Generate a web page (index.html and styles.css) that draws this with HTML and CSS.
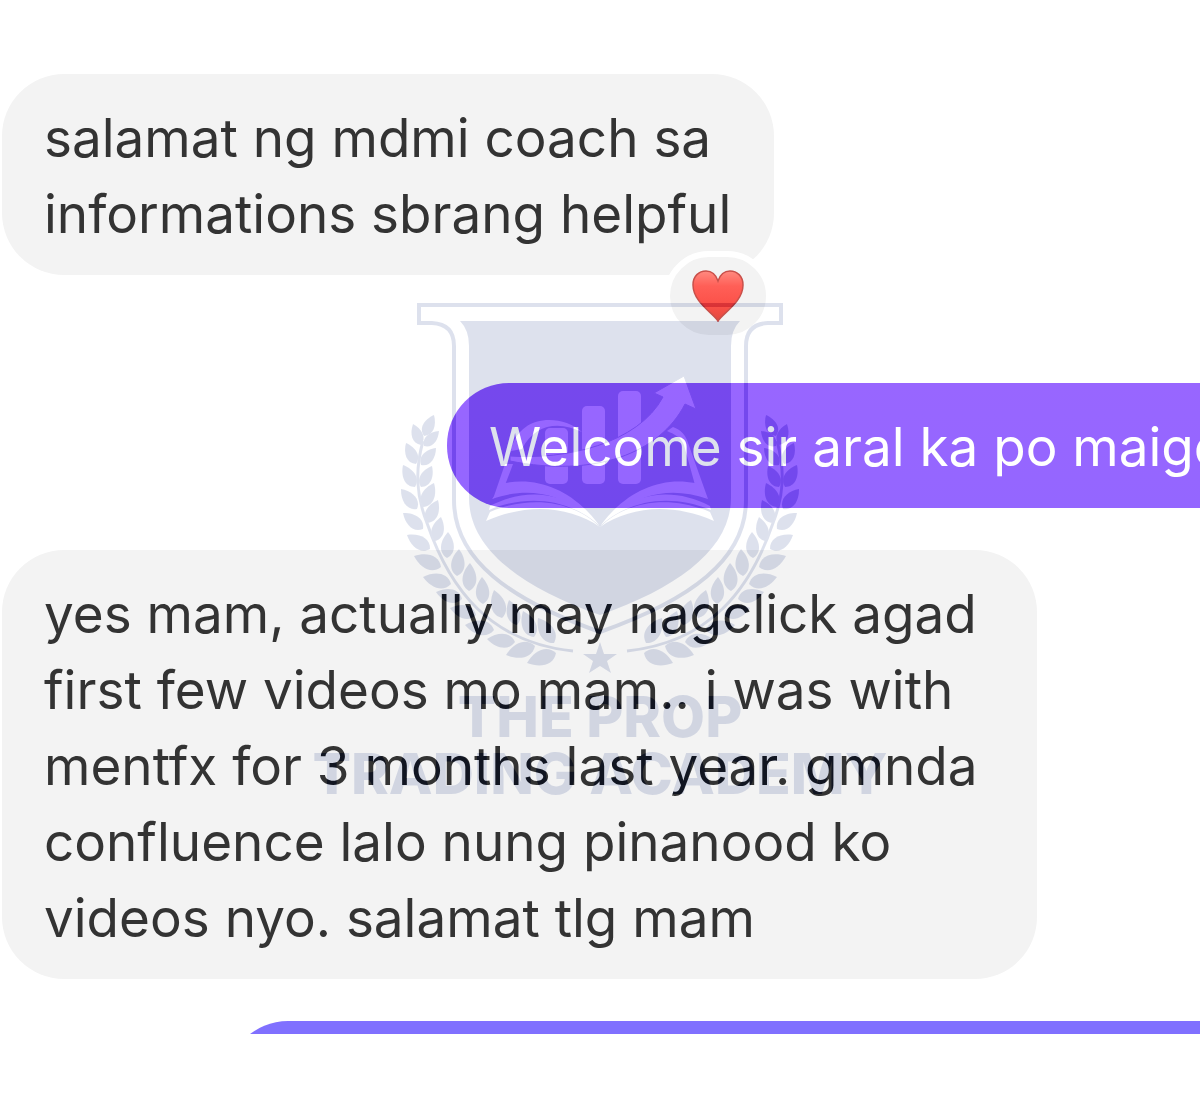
FILE: index.html
```
<!DOCTYPE html>
<html lang="tl">
  <head>
    <meta charset="utf-8">
    <title>Chat</title>
    <meta name="viewport" content="width=device-width, initial-scale=1">
    <link rel="stylesheet" href="styles.css">
  </head>

  <body>
    <main class="chat">
      <div class="bubble received reacted">
        salamat ng mdmi coach sa<br>informations sbrang helpful
        <span class="reaction">
          <svg class="heart" viewBox="0 0 52 52" role="img" aria-label="Heart">
            <defs>
              <linearGradient id="heartFill" x1="0" y1="0" x2="0" y2="1">
                <stop offset="0" stop-color="#ff8a80"/>
                <stop offset="0.3" stop-color="#ff5f57"/>
                <stop offset="0.7" stop-color="#fb5048"/>
                <stop offset="1" stop-color="#e04a40"/>
              </linearGradient>
            </defs>
            <path d="M26 51C21 43 1 32 1 15C1 6 7 1 14 1C20 1 24 5 26 11C28 5 32 1 38 1C45 1 51 6 51 15C51 32 31 43 26 51Z" fill="url(#heartFill)" stroke="#c9504a" stroke-width="1.5"/>
          </svg>
        </span>
      </div>

      <div class="bubble sent">Welcome sir aral ka po maige</div>

      <div class="bubble received long">
        yes mam, actually may nagclick agad<br>first few videos mo mam.. i was with<br>mentfx for 3 months last year. gmnda<br>confluence lalo nung pinanood ko<br>videos nyo. salamat tlg mam
      </div>

      <div class="next"><div class="bubble next-bubble"></div></div>

      <svg class="watermark" viewBox="300 290 600 520" role="img" aria-label="The Prop Trading Academy">
        <defs>
          <g id="page">
            <path d="M492 499L505 483C540 476 575 492 599 525C568 497 535 484 492 499Z"/>
            <path d="M490 506C528 486 570 492 599 525C570 500 530 493 489 510Z"/>
            <path d="M486 521L490 512C530 495 572 500 600 527C570 507 530 502 486 521Z"/>
          </g>
          <mask id="emblem" maskUnits="userSpaceOnUse" x="300" y="290" width="600" height="520">
            <rect x="300" y="290" width="600" height="520" fill="#fff"/>
            <g fill="#000">
              <rect x="545" y="428" width="23" height="56" rx="5"/>
              <rect x="582" y="406" width="23" height="78" rx="5"/>
              <rect x="618" y="391" width="23" height="93" rx="5"/>
              <path d="M511 451C518 415 560 413 582 432C560 421 535 423 522 449Z"/>
              <path d="M510 456C565 460 638 444 663 397L654 393L684 376L696 409L685 404C660 453 595 478 510 461Z" stroke="#fff" stroke-width="1"/>
              <path d="M505 464H513L505 485L493 499Z"/>
              <path d="M667 431L673 427C681 430 685 435 687 440L708 499L695 485L684 445C681 437 674 434 667 431Z"/>
              <use href="#page"/>
              <use href="#page" transform="translate(1200 0) scale(-1 1)"/>
            </g>
          </mask>
          <g id="laurel">
            <path d="M423 441C415 470 416 495 427 523C450 590 490 642 573 651" fill="none" stroke="#221e12" stroke-width="3"/>
            <g id="leaves"></g>
          </g>
        </defs>
        <path d="M419 305H781V323H768Q746 324 746 346V500C746 560 690 600 600 632C510 600 454 560 454 500V346Q454 324 432 323H419Z" fill="none" stroke="#221e12" stroke-width="4"/>
        <path mask="url(#emblem)" d="M460 321H740Q731 330 731 346V498C731 548 680 587 600 615C520 587 469 548 469 498V346Q469 330 460 321Z"/>
        <use href="#laurel"/>
        <use href="#laurel" transform="translate(1200 0) scale(-1 1)"/>
        <path d="M600 642L604 654H617L607 661L611 673L600 666L589 673L593 661L583 654H596Z"/>
        <text x="600" y="737">THE PROP</text>
        <text x="600" y="794">TRADING ACADEMY</text>
      </svg>
    </main>

    <script>
      // base x, base y, tip x, tip y of every leaf on the left branch
      const leaves = [
        [424, 436, 434, 415], [421, 445, 413, 424], [416, 464, 406, 443], [415, 487, 403, 465],
        [417, 509, 401, 489], [423, 529, 403, 513], [430, 549, 407, 535], [441, 567, 414, 556],
        [451, 584, 423, 577], [462, 599, 436, 592], [476, 615, 450, 608], [494, 630, 465, 625],
        [515, 642, 487, 639], [535, 646, 506, 655], [556, 653, 527, 663],
        [424, 446, 439, 431], [421, 465, 436, 448], [421, 487, 432, 466], [423, 507, 434, 483],
        [427, 523, 438, 500], [435, 541, 441, 517], [447, 558, 448, 532], [457, 576, 459, 549],
        [469, 591, 470, 563], [483, 604, 482, 577], [502, 618, 494, 590], [517, 625, 509, 600],
        [534, 637, 523, 611], [554, 643, 538, 618]
      ];
      const group = document.getElementById("leaves");
      leaves.forEach(([x1, y1, x2, y2]) => {
        const dx = x2 - x1, dy = y2 - y1;
        const leaf = document.createElementNS("http://www.w3.org/2000/svg", "path");
        const point = (along, out) => `${x1 + dx * along - dy * out} ${y1 + dy * along + dx * out}`;
        leaf.setAttribute("d", `M${x1} ${y1}C${point(0.2, 0.36)} ${point(0.65, 0.3)} ${x2} ${y2}C${point(0.65, -0.3)} ${point(0.2, -0.36)} ${x1} ${y1}Z`);
        group.appendChild(leaf);
      });
    </script>
  </body>
</html>
```
FILE: styles.css
```
body { margin: 0; background: #fff; font-family: Inter, "Liberation Sans", sans-serif; overflow-x: hidden; }
.chat { position: relative; display: flex; flex-direction: column; align-items: flex-start; padding: 74px 0 66px 2px; overflow: hidden; isolation: isolate; background: #fff; }
.bubble { box-sizing: border-box; padding: 26px 43px 23px 42px; border-radius: 62px; font-size: 53px; line-height: 76px; white-space: nowrap; }
.received { background: #f3f3f3; color: #333; }
.reacted { position: relative; margin-bottom: 108px; }
.long { width: 1035px; max-width: 100%; }
.sent { align-self: stretch; margin: 0 0 42px 445px; border-radius: 62px 0 0 62px; background: linear-gradient(#9866ff, #9466ff); color: #fff; }
.next { align-self: stretch; height: 13px; margin: 42px 0 0 224px; overflow: hidden; }
.next-bubble { height: 124px; border-radius: 62px 0 0 62px; background: #8070ff; }
.reaction { position: absolute; right: 2px; bottom: -66px; display: flex; align-items: center; justify-content: center; width: 108px; height: 90px; box-sizing: border-box; border: 6px solid #fff; border-radius: 45px; background: #f3f3f3; }
.heart { width: 52px; height: 52px; }
/* tints everything below it by the same amount */
.watermark { position: absolute; top: 290px; left: 50%; width: 600px; height: 520px; margin-left: -300px; mix-blend-mode: difference; fill: #221e12; pointer-events: none; }
.watermark text { font-size: 57px; font-weight: 800; text-anchor: middle; }
```
